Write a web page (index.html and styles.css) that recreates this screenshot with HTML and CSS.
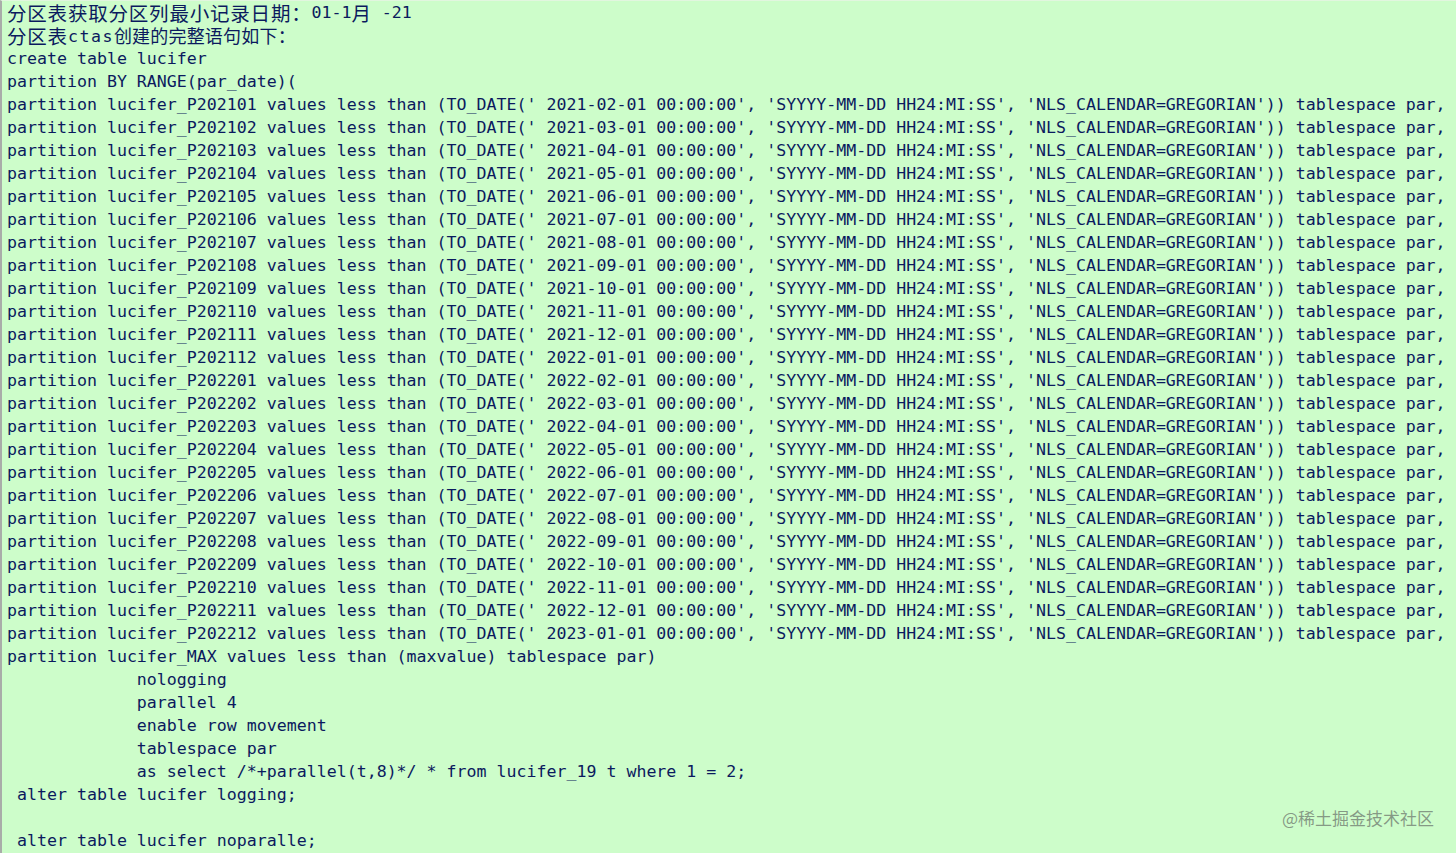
FILE: index.html
```html
<!DOCTYPE html>
<html lang="zh">
<head>
<meta charset="utf-8">
<title>partition</title>
<link rel="stylesheet" href="styles.css">
</head>
<body>
<div class="panel">
<div class="code">
<div class="line"><span class="cjk">分区表获取分区列最小记录日期：</span>01-1<span class="cjk">月</span> -21</div>
<div class="line"><span class="cjk">分区表</span><span class="lat">ctas</span><span class="cjk tight">创建的完整语句如下：</span></div>
<pre class="body">create table lucifer
partition BY RANGE(par_date)(
partition lucifer_P202101 values less than (TO_DATE(' 2021-02-01 00:00:00', 'SYYYY-MM-DD HH24:MI:SS', 'NLS_CALENDAR=GREGORIAN')) tablespace par,
partition lucifer_P202102 values less than (TO_DATE(' 2021-03-01 00:00:00', 'SYYYY-MM-DD HH24:MI:SS', 'NLS_CALENDAR=GREGORIAN')) tablespace par,
partition lucifer_P202103 values less than (TO_DATE(' 2021-04-01 00:00:00', 'SYYYY-MM-DD HH24:MI:SS', 'NLS_CALENDAR=GREGORIAN')) tablespace par,
partition lucifer_P202104 values less than (TO_DATE(' 2021-05-01 00:00:00', 'SYYYY-MM-DD HH24:MI:SS', 'NLS_CALENDAR=GREGORIAN')) tablespace par,
partition lucifer_P202105 values less than (TO_DATE(' 2021-06-01 00:00:00', 'SYYYY-MM-DD HH24:MI:SS', 'NLS_CALENDAR=GREGORIAN')) tablespace par,
partition lucifer_P202106 values less than (TO_DATE(' 2021-07-01 00:00:00', 'SYYYY-MM-DD HH24:MI:SS', 'NLS_CALENDAR=GREGORIAN')) tablespace par,
partition lucifer_P202107 values less than (TO_DATE(' 2021-08-01 00:00:00', 'SYYYY-MM-DD HH24:MI:SS', 'NLS_CALENDAR=GREGORIAN')) tablespace par,
partition lucifer_P202108 values less than (TO_DATE(' 2021-09-01 00:00:00', 'SYYYY-MM-DD HH24:MI:SS', 'NLS_CALENDAR=GREGORIAN')) tablespace par,
partition lucifer_P202109 values less than (TO_DATE(' 2021-10-01 00:00:00', 'SYYYY-MM-DD HH24:MI:SS', 'NLS_CALENDAR=GREGORIAN')) tablespace par,
partition lucifer_P202110 values less than (TO_DATE(' 2021-11-01 00:00:00', 'SYYYY-MM-DD HH24:MI:SS', 'NLS_CALENDAR=GREGORIAN')) tablespace par,
partition lucifer_P202111 values less than (TO_DATE(' 2021-12-01 00:00:00', 'SYYYY-MM-DD HH24:MI:SS', 'NLS_CALENDAR=GREGORIAN')) tablespace par,
partition lucifer_P202112 values less than (TO_DATE(' 2022-01-01 00:00:00', 'SYYYY-MM-DD HH24:MI:SS', 'NLS_CALENDAR=GREGORIAN')) tablespace par,
partition lucifer_P202201 values less than (TO_DATE(' 2022-02-01 00:00:00', 'SYYYY-MM-DD HH24:MI:SS', 'NLS_CALENDAR=GREGORIAN')) tablespace par,
partition lucifer_P202202 values less than (TO_DATE(' 2022-03-01 00:00:00', 'SYYYY-MM-DD HH24:MI:SS', 'NLS_CALENDAR=GREGORIAN')) tablespace par,
partition lucifer_P202203 values less than (TO_DATE(' 2022-04-01 00:00:00', 'SYYYY-MM-DD HH24:MI:SS', 'NLS_CALENDAR=GREGORIAN')) tablespace par,
partition lucifer_P202204 values less than (TO_DATE(' 2022-05-01 00:00:00', 'SYYYY-MM-DD HH24:MI:SS', 'NLS_CALENDAR=GREGORIAN')) tablespace par,
partition lucifer_P202205 values less than (TO_DATE(' 2022-06-01 00:00:00', 'SYYYY-MM-DD HH24:MI:SS', 'NLS_CALENDAR=GREGORIAN')) tablespace par,
partition lucifer_P202206 values less than (TO_DATE(' 2022-07-01 00:00:00', 'SYYYY-MM-DD HH24:MI:SS', 'NLS_CALENDAR=GREGORIAN')) tablespace par,
partition lucifer_P202207 values less than (TO_DATE(' 2022-08-01 00:00:00', 'SYYYY-MM-DD HH24:MI:SS', 'NLS_CALENDAR=GREGORIAN')) tablespace par,
partition lucifer_P202208 values less than (TO_DATE(' 2022-09-01 00:00:00', 'SYYYY-MM-DD HH24:MI:SS', 'NLS_CALENDAR=GREGORIAN')) tablespace par,
partition lucifer_P202209 values less than (TO_DATE(' 2022-10-01 00:00:00', 'SYYYY-MM-DD HH24:MI:SS', 'NLS_CALENDAR=GREGORIAN')) tablespace par,
partition lucifer_P202210 values less than (TO_DATE(' 2022-11-01 00:00:00', 'SYYYY-MM-DD HH24:MI:SS', 'NLS_CALENDAR=GREGORIAN')) tablespace par,
partition lucifer_P202211 values less than (TO_DATE(' 2022-12-01 00:00:00', 'SYYYY-MM-DD HH24:MI:SS', 'NLS_CALENDAR=GREGORIAN')) tablespace par,
partition lucifer_P202212 values less than (TO_DATE(' 2023-01-01 00:00:00', 'SYYYY-MM-DD HH24:MI:SS', 'NLS_CALENDAR=GREGORIAN')) tablespace par,
partition lucifer_MAX values less than (maxvalue) tablespace par)
             nologging
             parallel 4
             enable row movement
             tablespace par
             as select /*+parallel(t,8)*/ * from lucifer_19 t where 1 = 2;
 alter table lucifer logging;</pre>
<div class="blank"></div>
<pre class="body tail"> alter table lucifer noparalle;</pre>
</div>
<div class="mark">@稀土掘金技术社区</div>
</div>
</body>
</html>
```

FILE: styles.css
```css
html, body {
  margin: 0;
  padding: 0;
  background: #cdfdca;
}

.panel {
  position: relative;
  width: 1456px;
  height: 853px;
  box-sizing: border-box;
  background: #cdfdca;
  border-left: 2px solid #a9aca9;
  border-top: 1px solid #e2f6df;
  overflow: hidden;
}

.code {
  padding: 0 0 0 5px;
  font-family: "DejaVu Sans Mono", "Liberation Mono", "Noto Sans CJK SC", monospace;
  font-size: 16.6px;
  line-height: 23px;
  color: #0b1a5e;
}

.line {
  height: 23px;
  display: flex;
  align-items: center;
  white-space: pre;
}

.cjk {
  display: inline-block;
  height: 23px;
  font-family: "Noto Sans CJK SC", sans-serif;
  font-size: 19.5px;
  letter-spacing: 0.8px;
  line-height: 23px;
}

.cjk.tight {
  font-size: 18px;
  letter-spacing: 0.2px;
}

.lat {
  letter-spacing: 1.5px;
  padding-top: 2px;
}

.body {
  margin: 0;
  font: inherit;
  line-height: 23px;
  white-space: pre;
}

.blank {
  height: 23px;
}

.tail {
  width: 400px;
}

.mark {
  position: absolute;
  right: 22px;
  bottom: 24px;
  font-family: "Noto Sans CJK SC", sans-serif;
  font-size: 17px;
  line-height: 22px;
  color: rgba(110, 120, 110, 0.75);
}
```
